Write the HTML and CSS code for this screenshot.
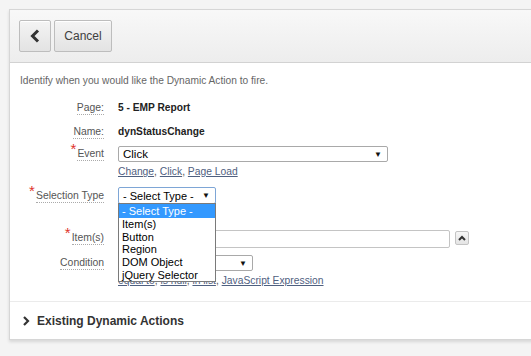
FILE: index.html
```html
<!DOCTYPE html>
<html>
<head>
<meta charset="utf-8">
<link rel="stylesheet" href="styles.css">
</head>
<body>
<div class="panel">
  <div class="header">
    <button class="btn btn-back" aria-label="Back">
      <svg width="10" height="14" viewBox="0 0 10 14"><path d="M8 1.5 L2.5 7 L8 12.5" fill="none" stroke="#333" stroke-width="3" stroke-linejoin="miter"/></svg>
    </button>
    <button class="btn btn-cancel">Cancel</button>
  </div>
  <div class="body">
    <p class="intro">Identify when you would like the Dynamic Action to fire.</p>
    <div class="row r-page">
      <span class="label"><span class="lt">Page:</span></span>
      <span class="value">5 - EMP Report</span>
    </div>
    <div class="row r-name">
      <span class="label"><span class="lt">Name:</span></span>
      <span class="value">dynStatusChange</span>
    </div>
    <div class="row r-event">
      <span class="label req"><span class="lt">Event</span></span>
      <div class="field">
        <div class="select sel-event"><span>Click</span><span class="arrow">▼</span></div>
        <div class="links"><a>Change</a>, <a>Click</a>, <a>Page Load</a></div>
      </div>
    </div>
    <div class="row r-seltype">
      <span class="label req"><span class="lt">Selection Type</span></span>
      <div class="field anchor">
        <div class="select sel-type focus"><span>- Select Type -</span><span class="arrow">▼</span></div>
        <ul class="dropdown">
          <li class="hl">- Select Type -</li>
          <li>Item(s)</li>
          <li>Button</li>
          <li>Region</li>
          <li>DOM Object</li>
          <li>jQuery Selector</li>
        </ul>
      </div>
    </div>
    <div class="row r-items">
      <span class="label req"><span class="lt">Item(s)</span></span>
      <div class="field inline">
        <div class="input"></div>
        <button class="mini"><svg width="8" height="6" viewBox="0 0 8 6"><path d="M1 5 L4 2 L7 5" fill="none" stroke="#333" stroke-width="2"/></svg></button>
      </div>
    </div>
    <div class="row r-cond">
      <span class="label"><span class="lt">Condition</span></span>
      <div class="field">
        <div class="select sel-cond"><span></span><span class="arrow">▼</span></div>
        <div class="links"><a>equal to</a>, <a>is null</a>, <a>in list</a>, <a>JavaScript Expression</a></div>
      </div>
    </div>
  </div>
  <div class="footer">
    <svg width="8" height="10" viewBox="0 0 8 10"><path d="M2 1 L6 5 L2 9" fill="none" stroke="#333" stroke-width="2.2"/></svg>
    <span class="ftitle">Existing Dynamic Actions</span>
  </div>
</div>
</body>
</html>
```
FILE: styles.css
```css
html, body { margin: 0; padding: 0; }
body {
  background: #f4f4f4;
  font-family: Arial, "Liberation Sans", sans-serif;
  width: 531px;
  height: 356px;
  overflow: hidden;
  color: #333;
}
.panel {
  margin: 9px 0 0 9px;
  width: 540px;
  background: #fff;
  border: 1px solid #d6d6d6;
  border-right: none;
  box-shadow: 0 2px 3px rgba(0,0,0,0.12);
}
.header {
  background: linear-gradient(#f8f8f8, #ededed);
  border-bottom: 1px solid #d2d2d2;
  display: flex;
  align-items: flex-start;
  gap: 3px;
  padding: 10px 0 0 9px;
  box-sizing: border-box;
  height: 53px;
}
.btn {
  height: 32px;
  border: 1px solid #bdbdbd;
  border-radius: 2px;
  background: linear-gradient(#f4f4f4, #e3e3e3);
  box-shadow: inset 0 1px 0 #fff;
  font-family: Arial, "Liberation Sans", sans-serif;
  font-size: 12px;
  color: #404040;
  padding: 0;
  display: flex;
  align-items: center;
  justify-content: center;
}
.btn-back { width: 32px; }
.btn-cancel { width: 58px; }
.body { padding: 11px 0 0 0; height: 239px; box-sizing: border-box; border-bottom: 1px solid #ebebeb; }
.intro {
  margin: 0 0 0 10px;
  font-size: 10.2px;
  color: #666;
  line-height: 14px;
}
.row {
  display: grid;
  grid-template-columns: 94px 1fr;
  column-gap: 14px;
  align-items: start;
  font-size: 10.4px;
}
.label {
  text-align: right;
  color: #555;
  line-height: 14px;
  position: relative;
}
.lt { border-bottom: 1px dotted #aaa; padding-bottom: 1px; }
.req .lt { position: relative; }
.req .lt::before {
  content: "*";
  color: #e0332b;
  font-size: 15px;
  position: absolute;
  left: -7px;
  top: -6px;
}
.value { font-weight: bold; color: #222; line-height: 14px; font-size: 10.2px; }
.r-page { margin-top: 13px; }
.r-name { margin-top: 10px; }
.r-event { margin-top: 7px; }
.r-event .label { padding-top: 1px; }
.r-seltype { margin-top: 9px; }
.r-seltype .label { padding-top: 2px; }
.r-items { margin-top: 26px; }
.r-items .label { padding-top: 1px; }
.r-cond { margin-top: 7px; }
.r-cond .label { padding-top: 1px; }
.field { position: relative; }
.inline { display: flex; align-items: flex-start; gap: 5px; }
.select {
  box-sizing: border-box;
  height: 16px;
  border: 1px solid #a9a9a9;
  border-radius: 2px;
  background: #fff;
  display: flex;
  justify-content: space-between;
  align-items: center;
  padding: 0 5px 0 4px;
  font-size: 11.5px;
  color: #000;
}
.arrow { font-size: 8px; color: #111; }
.sel-event { width: 270px; }
.sel-type { width: 98px; height: 17px; font-size: 11px; }
.sel-type.focus { border-color: #7ea6d6; }
.sel-cond { width: 135px; }
.links { font-size: 10.3px; color: #555; margin-top: 3px; line-height: 13px; }
.links a { color: #4f6080; text-decoration: underline; }
.dropdown {
  position: absolute;
  left: 0;
  top: 16px;
  width: 98px;
  box-sizing: border-box;
  margin: 0;
  padding: 0;
  list-style: none;
  background: #fff;
  border: 1px solid #7a7a7a;
  font-size: 11px;
  color: #000;
  z-index: 5;
}
.dropdown li { height: 12.7px; line-height: 13px; padding-left: 3px; }
.dropdown li.hl { background: #3399ff; color: #fff; height: 14px; line-height: 14px; }
.input {
  width: 332px;
  height: 18px;
  box-sizing: border-box;
  border: 1px solid #c4c4c4;
  border-radius: 2px;
}
.mini {
  width: 14px;
  height: 14px;
  padding: 0;
  border: 1px solid #c4c4c4;
  border-radius: 2px;
  background: linear-gradient(#f6f6f6, #e4e4e4);
  display: flex;
  align-items: center;
  justify-content: center;
  margin-top: 1px;
}
.footer {
  height: 37px;
  display: flex;
  align-items: center;
  gap: 7px;
  padding-left: 12px;
}
.ftitle { font-weight: bold; font-size: 12px; color: #333; }
```
